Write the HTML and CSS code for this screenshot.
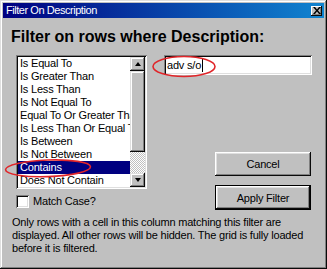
FILE: index.html
```html
<!DOCTYPE html>
<html>
<head>
<meta charset="utf-8">
<link rel="stylesheet" href="styles.css">
</head>
<body>
<div class="window">
  <div class="titlebar">
    <span class="title">Filter On Description</span>
    <span class="close"><svg width="8" height="7" viewBox="0 0 8 7"><path d="M0 0h2l2 2.5L6 0h2L5 3.5 8 7H6L4 4.5 2 7H0l3-3.5z" fill="#000"/></svg></span>
  </div>
  <div class="content">
    <h1 class="heading">Filter on rows where Description:</h1>
    <div class="main">
      <div class="leftcol">
        <div class="listbox">
          <ul class="items">
            <li>Is Equal To</li>
            <li>Is Greater Than</li>
            <li>Is Less Than</li>
            <li>Is Not Equal To</li>
            <li>Equal To Or Greater Than</li>
            <li>Is Less Than Or Equal To</li>
            <li>Is Between</li>
            <li>Is Not Between</li>
            <li class="selected">Contains</li>
            <li>Does Not Contain</li>
          </ul>
          <div class="scrollbar">
            <div class="sbtn"><span class="arrow-up"></span></div>
            <div class="thumb"></div>
            <div class="track"></div>
            <div class="sbtn"><span class="arrow-down"></span></div>
          </div>
        </div>
        <label class="check">
          <span class="box"></span>
          <span class="check-label">Match Case?</span>
        </label>
      </div>
      <div class="rightcol">
        <div class="textbox"><span class="value">adv s/o</span><span class="caret"></span></div>
        <div class="button cancel">Cancel</div>
        <div class="button apply">Apply Filter</div>
      </div>
    </div>
    <p class="desc">Only rows with a cell in this column matching this filter are<br>displayed. All other rows will be hidden. The grid is fully loaded<br>before it is filtered.</p>
  </div>
  <svg class="marks" width="327" height="269" viewBox="0 0 327 269">
    <ellipse cx="184" cy="66.5" rx="31" ry="10" fill="none" stroke="#e0262a" stroke-width="1.6"/>
    <ellipse cx="48" cy="168.3" rx="42.5" ry="8.3" fill="none" stroke="#e0262a" stroke-width="1.6" transform="rotate(-2 48 168)"/>
  </svg>
</div>
</body>
</html>
```

FILE: styles.css
```css
* { box-sizing: border-box; }
html, body { margin: 0; padding: 0; background: #c0c0c0; }
body {
  font-family: "Liberation Sans", Arial, sans-serif;
  font-size: 11px;
  letter-spacing: -0.2px;
  color: #000;
}
.window {
  position: relative;
  width: 327px;
  height: 269px;
  padding: 3px;
  background: #c0c0c0;
  box-shadow: inset -1px -1px #0a0a0a, inset 1px 1px #dfdfdf, inset -2px -2px #808080, inset 2px 2px #ffffff;
}
.titlebar {
  height: 15px;
  background: linear-gradient(to right, #000080, #1084d0);
  display: flex;
  align-items: center;
  justify-content: space-between;
  padding: 0 2px 0 3px;
}
.title {
  color: #fff;
  font-size: 11px;
  letter-spacing: -0.45px;
  line-height: 15px;
}
.close {
  width: 11px;
  height: 10px;
  background: #c0c0c0;
  box-shadow: inset -1px -1px #0a0a0a, inset 1px 1px #ffffff, inset -2px -2px #808080;
  display: flex;
  align-items: center;
  justify-content: center;
}
.close svg { display: block; }
.content {
  padding: 9px 8px 0 8px;
}
.heading {
  margin: 0;
  font-size: 16px;
  font-weight: bold;
  line-height: 20px;
  letter-spacing: 0;
  white-space: nowrap;
}
.main {
  margin-top: 8px;
  padding-left: 5px;
  display: grid;
  grid-template-columns: 131px 148px;
  column-gap: 17px;
}
.listbox {
  width: 131px;
  height: 134px;
  padding: 2px;
  background: #fff;
  box-shadow: inset 1px 1px #808080, inset -1px -1px #ffffff, inset 2px 2px #0a0a0a, inset -2px -2px #dfdfdf;
  display: flex;
}
.items {
  list-style: none;
  margin: 0;
  padding: 0;
  flex: 1;
  overflow: hidden;
}
.items li {
  height: 13px;
  line-height: 13px;
  padding-left: 2px;
  white-space: nowrap;
  overflow: hidden;
}
.items li.selected {
  background: #000080;
  color: #fff;
}
.scrollbar {
  width: 15px;
  display: flex;
  flex-direction: column;
}
.sbtn, .thumb {
  background: #c0c0c0;
  box-shadow: inset -1px -1px #0a0a0a, inset 1px 1px #dfdfdf, inset -2px -2px #808080, inset 2px 2px #ffffff;
}
.sbtn {
  height: 14px;
  display: flex;
  align-items: center;
  justify-content: center;
}
.thumb { height: 81px; }
.track {
  flex: 1;
  background-color: #c0c0c0;
  background-image: repeating-conic-gradient(#ffffff 0 25%, #c0c0c0 0 50%);
  background-size: 2px 2px;
}
.arrow-up, .arrow-down {
  width: 0;
  height: 0;
  border-left: 3.5px solid transparent;
  border-right: 3.5px solid transparent;
}
.arrow-up { border-bottom: 4px solid #000; }
.arrow-down { border-top: 4px solid #000; }
.check {
  margin-top: 6px;
  display: flex;
  align-items: center;
  height: 13px;
}
.box {
  width: 13px;
  height: 13px;
  background: #fff;
  box-shadow: inset 1px 1px #808080, inset -1px -1px #ffffff, inset 2px 2px #0a0a0a, inset -2px -2px #dfdfdf;
}
.check-label {
  margin-left: 4px;
  line-height: 13px;
}
.rightcol {
  display: flex;
  flex-direction: column;
}
.textbox {
  width: 148px;
  height: 20px;
  background: #fff;
  box-shadow: inset 1px 1px #808080, inset -1px -1px #ffffff, inset 2px 2px #0a0a0a, inset -2px -2px #dfdfdf;
  padding: 0 3px;
  display: flex;
  align-items: center;
}
.value { line-height: 13px; }
.caret {
  width: 1px;
  height: 13px;
  background: #000;
  margin-left: 1px;
}
.button {
  width: 96px;
  align-self: flex-end;
  margin-right: 1px;
  background: #c0c0c0;
  display: flex;
  align-items: center;
  justify-content: center;
  box-shadow: inset -1px -1px #0a0a0a, inset 1px 1px #ffffff, inset -2px -2px #808080, inset 2px 2px #dfdfdf;
}
.cancel {
  margin-top: 77px;
  height: 24px;
}
.apply {
  margin-top: 9px;
  height: 25px;
  border: 1px solid #000;
}
.desc {
  margin: 6px 0 0 1px;
  line-height: 13px;
  white-space: nowrap;
}
.marks {
  position: absolute;
  left: 0;
  top: 0;
  pointer-events: none;
}
```
